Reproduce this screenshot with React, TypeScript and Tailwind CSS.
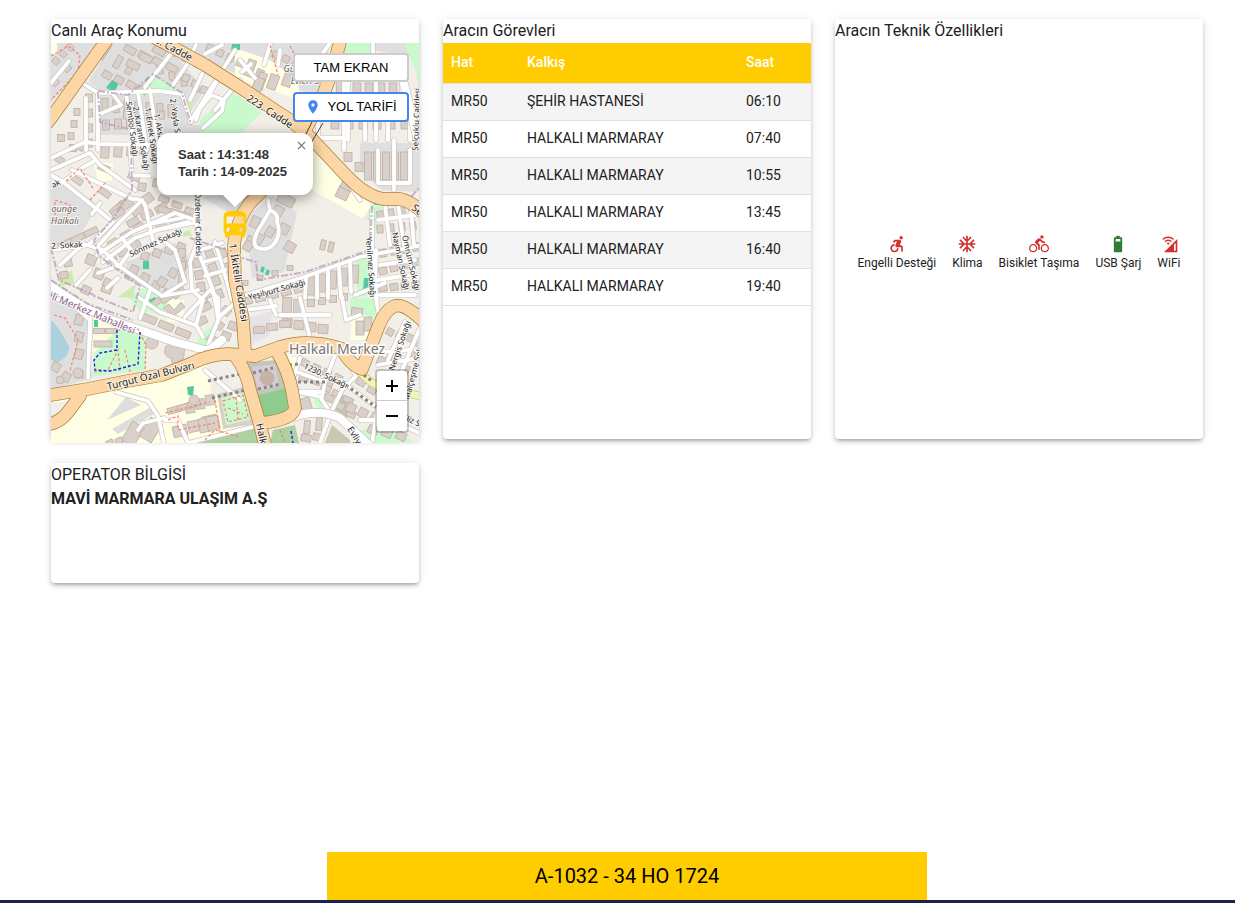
import React from "react";
import {
  MdAccessibleForward,
  MdAcUnit,
  MdCellWifi,
  MdDirectionsBike,
  MdDirectionsBus,
  MdLocationOn,
} from "react-icons/md";

type Area = [fill: string, d: string];
type Row = [x: number, y: number, dx: number, dy: number, count: number, w: number, h: number, angle: number];
type Label = [text: string, x: number, y: number, angle: number, size: number];

const areas: Area[] = [
  ["#e0dfdf", "M98 43H419V58L330 43L318 95L240 75L165 43L205 90L185 120H165V92H100V90L88 82L112 43Z"],
  ["#e0dfdf", "M51 43H100L51 103Z"],
  ["#ffffe5", "M51 43H57V54H51Z"],
  ["#e0dfdf", "M100 92L190 90L190 135H98Z"],
  ["#e0dfdf", "M51 190L65 180L98 205L82 232L51 248Z"],
  ["#e0dfdf", "M126 262L175 243L188 255L187 285L160 296L126 278Z"],
  ["#e0dfdf", "M240 222L272 196L297 213L284 272L252 278L248 240Z"],
  ["#e0dfdf", "M165 125L240 125L240 215L232 215L170 178Z"],
  ["#e0dfdf", "M360 143H419V192L382 190L360 170Z"],
  ["#e0dfdf", "M51 297L88 312L92 378L51 390Z"],
  ["#ffffe5", "M51 402L90 393L165 379L205 363L212 370L235 400L250 443H51V425L75 402Z"],
  ["#ffffe5", "M235 48L270 60L298 80L300 100L235 78Z"],
  ["#ffffe5", "M290 135L312 145L345 178L372 206L362 218L312 190Z"],
  ["#ffffe5", "M94 163L113 163L112 180L98 182Z"],
  ["#ffffe5", "M160 300H184V322H168Z"],
  ["#ffffe5", "M352 315H376V340H350Z"],
  ["#ffffe5", "M278 355L300 358L292 378L285 378Z"],
  ["#f2efe9", "M207 366L238 362L245 386L212 398Z"],
  ["#fffbe0", "M90 318H118V352H90Z"],
  ["#c8facc", "M343 43H372V62H341Z M376 43H404L416 72L419 92V43Z"],
  ["#c8facc", "M150 73L182 91L140 96Z"],
  ["#cdebb0", "M183 97L193 100L190 117L186 116Z"],
  ["#c8facc", "M200 120L232 92L262 112L240 134H200Z"],
  ["#c8facc", "M366 218L373 200L384 204L376 230Z"],
  ["#c8facc", "M356 257L371 256L373 295L357 297Z"],
  ["#c8facc", "M350 298H376V318L350 312Z"],
  ["#c8facc", "M95 352L118 329L146 330V370L92 377Z"],
  ["#c8facc", "M128 297L150 285L170 296L163 315L140 311Z"],
  ["#cdebb0", "M60 277L72 270L74 284L59 286Z M118 297L136 284L133 298Z"],
  ["#c8facc", "M196 340L212 326L216 348L206 352Z"],
  ["#cdebb0", "M184 232L190 230L192 236L182 237Z"],
  ["#d9d0c9", "M217 394L247 386L253 424L223 429Z"],
  ["#c8facc", "M221 398L244 392L250 420L226 425Z"],
  ["#c5c7b5", "M242 363L276 360L288 395L287 414L262 418L256 390Z"],
  ["#8dcc8d", "M256 396L285 388L289 412L264 420Z"],
  ["#d8ccd8", "M253 367L275 364L279 386L258 391Z"],
  ["#aed1a0", "M195 440L260 422L262 443H193Z"],
  ["#aed1a0", "M273 430L295 425L299 443H270Z"],
  ["#c8facc", "M313 396L322 396L323 409L316 407Z"],
  ["#c8facc", "M361 430L400 428L412 443H355Z"],
  ["#c8c7b0", "M332 425L350 440V443H325Z"],
  ["#c5c7b5", "M340 393L353 401L347 418L335 410Z"],
  ["#e6e3e6", "M248 318L272 311L270 335L250 345Z"],
  ["#dddddd", "M107 420L126 397L141 405Z M112 429L151 407L156 413L118 434Z"],
  ["#aad3df", "M51 320C60 328 64 338 69 346C70 356 62 360 56 363L51 359Z"],
  ["#54c99e", "M112 80L119 82L115 92L106 88Z M147 77L153 79L150 86L145 83Z M143 261H149V269H143Z M187 387L194 386L193 396L188 395Z M186 403L191 402V406H186Z M364 278H373V290H363Z M232 44H240V50H231Z M149 300L155 297L157 302L151 305Z M94 320H98V327H94Z M262 266L265 268L263 273L260 271Z M267 269L270 271L268 276L265 274Z"],
  ["#88c9a4", "M360 356L370 351L368 362Z"],
];

const trunk = [
  "M116 27L51 118L40 132",
  "M140 30L165 43L205 65L235 84L290 120L310 137L340 169Q365 197 384 199L400 199Q410 201 424 213",
  "M341 38L332 72L320 103L304 132L285 168L250 203Q236 221 234 245L235 280L243 320L245 352",
  "M45 396L88 389L128 381L162 375L190 364Q210 354 228 354L255 356L280 347Q310 338 342 349Q350 365 362 369L379 325Q386 309 395 306Q405 303 425 323",
  "M45 425Q60 423 68 412L80 396",
  "M236 357Q246 370 250 390L257 414L266 448",
  "M276 350Q288 370 292 390L295 408Q293 420 262 423",
];

const avenues = ["M47 283Q90 315 135 328L175 342L205 350", "M222 340L205 353M293 417Q320 408 340 418L372 448", "M404 84L419 145"];

const streets = [
  "M84 84L98 93L160 91L182 94L191 122",
  "M51 83L69 61M98 92V150M86 98V150M51 158L85 142L100 144L150 145",
  "M150 90L160 160M138 92L147 150M126 93L133 140M113 94L121 105L100 114",
  "M205 68L190 100M220 76L203 105M190 60L173 85M173 51L145 87M235 50L190 122",
  "M196 45L190 58M222 45L205 54M240 80L215 110M196 120L200 108L211 95L224 100L222 111L203 128",
  "M240 60L255 78M270 45L264 65M280 50L278 65M251 64L242 72",
  "M63 182L113 222L103 232L88 245L51 250M100 203L92 214M72 170L132 199Q142 198 145 205L153 240",
  "M51 175L63 182L82 168L96 160",
  "M51 170L90 153L100 165L135 190M130 145L132 175L150 176",
  "M96 248L118 224L142 200M97 255L132 232L175 213L195 220M103 262L135 238L158 230L198 222M150 224L182 218M155 230L188 222",
  "M84 244L103 250L119 266L162 296L198 290M122 238L131 250L121 264",
  "M162 296L185 282L175 250L160 238M198 240L190 262L192 290L203 300",
  "M197 248L213 290L218 318M215 242L225 275L232 300M203 262L220 258M205 276L225 270",
  "M195 215L200 250L222 243",
  "M268 200L270 210Q279 214 277 222Q282 235 273 245Q266 252 256 247Q251 240 262 224L270 210",
  "M238 260L235 290L246 295L304 277L360 257L418 246",
  "M306 278L305 298M317 274L317 298M328 271L328 298M339 267L341 298M350 263L351 292M355 295L385 283",
  "M245 310L276 306M270 300L276 315M300 298L310 338M280 315L330 315M342 297L346 320L360 315M376 250L375 295L380 320",
  "M372 210L372 260L377 300M385 205L390 245M398 204L404 245M411 210L414 245M378 220L415 215M380 265L415 260M378 280L415 274M380 295L415 295",
  "M378 150V183H410V150M394 140V190M330 95L365 95V140M348 60V140M344 80V150M318 100V138H343",
  "M376 60V140M373 43V60M402 60V100M365 98H402M388 110V140M410 110V140",
  "M60 265L80 247M98 273L118 266M76 285L90 270M118 278L107 288",
  "M138 297L160 312L195 325M150 290L140 318M185 317L210 290L218 298M203 300L196 325L203 337M218 300L219 318L206 350M218 318L235 303",
  "M90 318L88 378M70 302L90 320V340M51 296L74 306",
  "M116 392L148 401L158 416L164 443M165 420L178 420L188 443M138 430L143 423L164 418",
  "M188 443L260 425M205 370L240 400",
  "M300 358L293 378L297 392L320 392M297 372L325 382L322 397L297 392M320 397L330 412M335 355L325 382M348 362L356 376L342 390L330 415M340 380L375 406",
  "M378 365L419 358M380 352L410 350M405 322L388 360M419 330L400 375M375 385L385 376",
  "M329 418L320 443M374 420L360 420M378 406L372 443M380 415L419 433",
  "M345 178L360 200M330 43L318 60",
];

const rows: Row[] = [
  [105, 52, 0, 12, 1, 16, 5, -55], [118, 62, 12, 6, 2, 13, 6, -60], [107, 75, 12, 5, 4, 9, 7, 30],
  [130, 50, 14, 6, 4, 12, 7, 30], [133, 65, 13, -7, 3, 13, 7, 28], [174, 52, 12, 6, 4, 6, 8, 25],
  [160, 70, 12, 6, 5, 6, 8, -8], [186, 78, 9, 6, 3, 7, 7, 20], [56, 61, 7, -7, 3, 7, 6, 45],
  [55, 82, 12, -14, 2, 7, 7, 45], [89, 98, 0, 15, 4, 7, 8, 0], [77, 112, -3, 12, 3, 6, 7, 0],
  [61, 138, 12, 10, 2, 7, 7, 0], [105, 105, 11, 1, 7, 6, 13, -2], [106, 125, 12, -1, 3, 7, 10, 0],
  [105, 152, 13, -1, 4, 8, 12, 4], [126, 115, 12, 0, 5, 5, 8, 4], [210, 48, 10, 5, 6, 7, 7, 22],
  [250, 68, 11, 13, 2, 8, 17, 20], [258, 85, 15, -3, 3, 9, 15, 20], [276, 55, 10, 4, 5, 7, 7, 28],
  [340, 92, 12, 0, 1, 7, 45, -2], [357, 92, 12, 0, 4, 8, 18, 0], [335, 120, 14, 0, 6, 8, 18, 0],
  [368, 166, 9, 0, 5, 7, 28, 0], [348, 157, 11, 10, 2, 8, 9, 0], [343, 193, 5, -9, 2, 12, 12, 25],
  [60, 160, 20, -13, 2, 8, 6, 30], [77, 180, 28, 13, 2, 12, 6, 35], [104, 168, 30, 9, 3, 12, 6, 22],
  [117, 208, 8, -6, 2, 16, 6, -42], [65, 244, 13, -6, 3, 14, 6, -25], [118, 213, 9, -9, 2, 12, 8, -35],
  [133, 222, 14, -7, 3, 12, 7, -30], [164, 210, 12, 3, 3, 12, 6, 18], [113, 243, 13, -8, 3, 10, 7, -30],
  [111, 259, 12, -7, 3, 11, 7, -28], [161, 226, 14, -5, 2, 10, 6, -15], [137, 210, 10, -11, 2, 12, 9, -35],
  [164, 199, 13, 6, 3, 10, 6, 18], [142, 187, 15, -4, 2, 8, 8, 8], [145, 256, 12, -3, 4, 8, 8, 20],
  [134, 270, 11, 8, 4, 8, 9, 25], [162, 282, 11, -9, 3, 8, 9, 30], [182, 253, 0, 13, 3, 7, 9, 4],
  [197, 263, 2, 12, 4, 8, 9, -10], [210, 255, 3, 13, 4, 8, 9, -20], [223, 253, 3, 15, 3, 7, 9, -16],
  [68, 263, -4, 12, 2, 8, 7, -10], [91, 260, 8, 14, 3, 10, 10, 20], [86, 290, 22, -7, 3, 9, 8, 25],
  [286, 200, 0, 0, 1, 17, 10, 26], [278, 211, 6, 18, 3, 10, 10, 30], [255, 222, -5, 20, 2, 8, 11, 25],
  [248, 246, 11, -7, 3, 8, 10, 30], [323, 245, 8, 2, 2, 5, 10, 12], [247, 301, 13, -3, 5, 10, 7, -14],
  [311, 286, 11, -3, 5, 7, 18, 2], [311, 303, 11, -2, 4, 7, 7, 0], [245, 283, 15, -5, 4, 6, 5, 0],
  [287, 306, 11, 2, 2, 9, 17, 2], [287, 323, 12, 2, 4, 10, 9, 4], [259, 330, 13, -3, 3, 11, 7, -4],
  [357, 312, 0, 0, 1, 11, 8, 5], [360, 328, 8, -4, 2, 8, 14, 0],
  [380, 215, 11, -2, 4, 6, 8, -8], [380, 229, 11, -1, 4, 6, 8, -5], [383, 253, 11, -2, 4, 7, 8, -8],
  [383, 271, 11, -3, 4, 8, 7, -12], [383, 288, 11, -1, 4, 8, 7, -8], [390, 332, 10, 3, 3, 7, 7, 28],
  [155, 303, 12, -5, 3, 13, 6, -35], [149, 319, 17, 7, 3, 15, 7, 22], [210, 293, -4, 14, 3, 10, 7, -28],
  [226, 311, -7, 14, 3, 9, 8, 40], [226, 336, 7, -10, 2, 9, 8, 20], [153, 338, 22, 12, 2, 10, 9, 12],
  [99, 331, 12, 0, 2, 11, 5, 0], [103, 344, 0, 0, 1, 18, 6, 0], [79, 320, 0, 17, 3, 8, 10, 15],
  [56, 367, 10, 10, 2, 8, 9, 30], [79, 374, 12, -8, 1, 8, 8, 0], [190, 408, 10, -4, 3, 9, 10, -8],
  [180, 431, 15, -5, 3, 14, 11, -12], [133, 434, 18, -4, 2, 14, 22, 32], [174, 410, 10, -3, 3, 13, 6, -15],
  [110, 443, 9, -2, 2, 7, 6, -25], [205, 425, 8, -2, 2, 12, 14, -12], [306, 405, 0, 0, 1, 10, 14, -18],
  [307, 427, 12, -3, 2, 6, 13, 5], [318, 437, -12, 1, 2, 10, 7, 10], [305, 363, 11, 5, 4, 8, 7, 28],
  [304, 378, 12, 3, 3, 9, 7, 20], [326, 388, 11, 6, 3, 10, 6, 25], [329, 398, 11, 8, 3, 9, 7, 25],
  [351, 408, 12, 5, 3, 9, 9, 28], [361, 382, 11, 8, 2, 9, 7, 30], [382, 361, 10, -5, 2, 9, 8, 28],
  [373, 430, 14, 3, 3, 10, 8, 25], [406, 370, 6, -14, 3, 6, 9, 25],
];

const boundaries = [
  "M98 91L128 95L153 74L182 93L191 125M98 92L100 122L128 129",
  "M131 145L132 190L112 220L94 240L99 256L140 286L133 312L92 295",
  "M51 248L59 280L94 295M372 206L370 250L305 272L258 280L256 262L235 256",
  "M190 238L220 248L235 252M374 204L395 204L410 198L419 188",
  "M51 280L88 304L133 320",
];

const footways = [
  "M51 56L68 46L80 55L78 72L51 100",
  "M66 181L80 168L94 190M90 200L106 182",
  "M54 315L65 318L78 340L70 371M55 220L55 200L70 205L65 225",
  "M94 372L120 370L118 350L108 370M117 330L138 329L146 345L145 370M125 350L130 372",
  "M168 420L178 416V430L215 423M165 413L210 402M215 400L220 432M223 401L243 395L248 417L228 422ZM228 408L243 414M236 397L238 420",
  "M205 440L215 430L240 437M270 45L278 75M290 46L302 68",
  "M280 430L285 443",
];

const labels: Label[] = [
  ["3. Cadde", 154, 42, 28, 10], ["223. Cadde", 246, 100, 33, 10], ["2. Yayla S.", 170, 99, 82, 8],
  ["1. Aksa S.", 154, 114, 80, 8], ["1. Emek Sokağı", 145, 108, 82, 8], ["2. Karanfil Sokağı", 133, 107, 80, 8],
  ["Sembol Sokağı", 126, 102, 83, 8], ["Selçuklu Caddesi", 418, 151, -88, 8], ["ak", 53, 188, -25, 8],
  ["42. Sokak", 47, 249, -3, 8], ["Sönmez Sokağı", 131, 257, -25, 8], ["Özdemir Caddesi", 195, 192, 89, 8],
  ["1. İkitelli Caddesi", 229, 244, 81, 10], ["Yenilmez Sokağı", 366, 237, 86, 8], ["Nayman Sokağı", 392, 233, 78, 8],
  ["Ömrüm Sokağı", 402, 236, 77, 8], ["Yeşilyurt Sokağı", 249, 300, -15, 8], ["Turgut Özal Bulvarı", 108, 390, -14, 10],
  ["1230. Sokağı", 303, 368, 25, 8], ["Nergis Sokağı", 394, 371, -71, 8], ["Malçeşme Sokağı", 409, 400, -75, 8],
  ["Evliya Çelebi", 347, 429, 58, 9], ["Halkalı Cad.", 256, 424, 78, 10], ["Filiz Sokak", 400, 418, 25, 8], ["Se", 411, 209, 38, 10],
];

function Roads({ paths, casing, fill, width }: { paths: string[]; casing: string; fill: string; width: number }) {
  return (
    <g fill="none" strokeLinejoin="round" strokeLinecap="round">
      {paths.map((d) => (
        <path key={`c${d}`} d={d} stroke={casing} strokeWidth={width + 1.4} />
      ))}
      {paths.map((d) => (
        <path key={d} d={d} stroke={fill} strokeWidth={width} />
      ))}
    </g>
  );
}

function StreetMap() {
  return (
    <svg
      viewBox="51 43 368 400"
      preserveAspectRatio="xMidYMid slice"
      className="block h-[400px] w-full"
      role="img"
      aria-label="Harita"
    >
      <rect x="-400" y="-400" width="1400" height="1400" fill="#f2efe9" />
      {areas.map(([fill, d]) => (
        <path key={d} d={d} fill={fill} />
      ))}
      <g fill="#d9d0c9" stroke="#bfaea3" strokeWidth="0.8">
        {rows.flatMap(([x, y, dx, dy, count, w, h, angle]) =>
          Array.from({ length: count }, (_, i) => (
            <rect
              key={`${x}-${y}-${i}`}
              x={-w / 2}
              y={-h / 2}
              width={w}
              height={h}
              transform={`translate(${x + dx * i} ${y + dy * i}) rotate(${angle})`}
            />
          ))
        )}
        <path d="M165 350C164 344 173 343 176 347C181 343 187 348 184 353C185 359 180 360 180 364C174 367 170 362 172 358C167 358 164 355 165 350Z" />
        <path d="M163 308L169 304L174 310L181 302L185 307L174 316Z" />
        <circle cx="267" cy="378" r="7" fill="#c5b3aa" />
        <circle cx="152" cy="343" r="6" />
        <circle cx="194" cy="400" r="5" />
        <circle cx="60" cy="380" r="4" />
        <circle cx="78" cy="373" r="5" />
      </g>
      <Roads paths={streets} casing="#c9c5c2" fill="#ffffff" width={3.8} />
      <Roads paths={avenues} casing="#c9c5c2" fill="#ffffff" width={8} />
      <Roads paths={["M357 368Q372 388 392 390L425 397"]} casing="#c5c58a" fill="#f3f5b0" width={7} />
      <g fill="none" stroke="#b79cba" strokeWidth="2" strokeDasharray="7 2 2 2" opacity="0.75">
        {boundaries.map((d) => (
          <path key={d} d={d} />
        ))}
      </g>
      <g fill="none" stroke="#fa8072" strokeWidth="1.2" strokeDasharray="3 2">
        {footways.map((d) => (
          <path key={d} d={d} />
        ))}
      </g>
      <path
        d="M117 330V350L100 353L94 360L95 370L110 371L138 364L140 332M291 431L293 443"
        fill="none"
        stroke="#1e1ee6"
        strokeWidth="1.4"
        strokeDasharray="3 2"
      />
      <path
        d="M208 381L240 374M212 398L246 390M253 373L273 368M258 389L281 384M289 365L299 364M298 382H328M354 368L372 381M346 385L376 407"
        fill="none"
        stroke="#888583"
        strokeWidth="3"
        strokeDasharray="3 3"
      />
      <Roads paths={trunk} casing="#a97b35" fill="#fcd6a4" width={12} />
      <path d="M304 138L313 120M311 143L323 123" stroke="#4b3c28" strokeWidth="1" fill="none" />
      <g stroke="#ffffff" strokeWidth="2" strokeOpacity="0.7" paintOrder="stroke" className="font-['Noto_Sans',sans-serif]">
        {labels.map(([text, x, y, angle, size]) => (
          <text key={text} fontSize={size} fill="#222222" transform={`translate(${x} ${y}) rotate(${angle})`}>
            {text}
          </text>
        ))}
        <text fontSize="10" fill="#8d618b" transform="translate(46 297) rotate(23)">
          eli Merkez Mahallesi
        </text>
        <g fill="#6b6560" fontStyle="italic" fontSize="9" textAnchor="middle">
          <text x="62" y="212">Lounge</text>
          <text x="65" y="224">Halkalı</text>
          <text x="296" y="72">Güneş</text>
          <text x="306" y="84">Evleri S.</text>
        </g>
        <text x="337" y="354" fontSize="14" fill="#777777" strokeWidth="3" strokeOpacity="0.9" textAnchor="middle">
          Halkalı Merkez
        </text>
      </g>
    </svg>
  );
}

function BatteryIcon({ className }: { className: string }) {
  return (
    <svg viewBox="0 0 24 24" fill="currentColor" fillRule="evenodd" className={className} aria-hidden="true">
      <path d="M15.67 4H14V2h-4v2H8.33C7.6 4 7 4.6 7 5.33v15.33C7 21.4 7.6 22 8.33 22h7.33c.74 0 1.34-.6 1.34-1.33V5.33C17 4.6 16.4 4 15.67 4zM9.2 6h5.6v3H9.2z" />
    </svg>
  );
}

function Card({ title, className, children }: { title: string; className: string; children?: React.ReactNode }) {
  return (
    <section
      className={`flex flex-col rounded bg-white shadow-[0_3px_3px_-2px_rgba(0,0,0,0.2),0_3px_4px_0_rgba(0,0,0,0.14),0_1px_8px_0_rgba(0,0,0,0.12)] ${className}`}
    >
      <h2 className="text-base leading-6">{title}</h2>
      {children}
    </section>
  );
}

const trips = [
  ["MR50", "ŞEHİR HASTANESİ", "06:10"],
  ["MR50", "HALKALI MARMARAY", "07:40"],
  ["MR50", "HALKALI MARMARAY", "10:55"],
  ["MR50", "HALKALI MARMARAY", "13:45"],
  ["MR50", "HALKALI MARMARAY", "16:40"],
  ["MR50", "HALKALI MARMARAY", "19:40"],
];

const features = [
  { label: "Engelli Desteği", Icon: MdAccessibleForward, color: "text-[#d32f2f]" },
  { label: "Klima", Icon: MdAcUnit, color: "text-[#d32f2f]" },
  { label: "Bisiklet Taşıma", Icon: MdDirectionsBike, color: "text-[#d32f2f]" },
  { label: "USB Şarj", Icon: BatteryIcon, color: "text-[#2e7d32]" },
  { label: "WiFi", Icon: MdCellWifi, color: "text-[#d32f2f]" },
];

function LiveMap() {
  return (
    <div className="relative -mb-1 overflow-hidden font-['Liberation_Sans',Arial,sans-serif]">
      <StreetMap />
      <MdDirectionsBus className="absolute top-[165px] left-1/2 size-[34px] -translate-x-1/2 text-[#ffcc00]" />
      <div className="absolute top-[90px] left-1/2 w-[156px] -translate-x-1/2">
        <svg viewBox="0 0 32 16" className="absolute top-[58px] left-1/2 h-4 w-8 -translate-x-1/2 drop-shadow-md" aria-hidden="true">
          <path d="M0 0H32L16 16Z" fill="#ffffff" />
        </svg>
        <div className="relative rounded-xl bg-white pt-[13px] pr-6 pb-[15px] pl-[21px] text-[13px] leading-[17px] font-bold whitespace-nowrap text-[#333333] shadow-[0_3px_14px_rgba(0,0,0,0.4)]">
          <p>Saat : 14:31:48</p>
          <p>Tarih : 14-09-2025</p>
        </div>
        <svg viewBox="0 0 32 16" className="absolute top-[58px] left-1/2 h-4 w-8 -translate-x-1/2" aria-hidden="true">
          <path d="M0 0H32L16 16Z" fill="#ffffff" />
        </svg>
        <button type="button" aria-label="Kapat" className="absolute top-0 right-0 flex size-6 items-center justify-center text-[#757575]">
          <svg viewBox="0 0 10 10" className="size-[9px]" aria-hidden="true">
            <path d="M1 1L9 9M9 1L1 9" stroke="currentColor" strokeWidth="1.4" fill="none" />
          </svg>
        </button>
      </div>
      <div className="absolute top-2.5 right-2.5 flex w-[116px] flex-col gap-2.5 text-[13px] text-black">
        <button type="button" className="h-[29px] rounded border-2 border-[#cccccc] bg-white">
          TAM EKRAN
        </button>
        <button type="button" className="flex h-[30px] items-center justify-center gap-1.5 rounded border-2 border-[#4285f4] bg-white">
          <MdLocationOn className="size-4 text-[#4285f4]" />
          YOL TARİFİ
        </button>
      </div>
      <div className="absolute right-2.5 bottom-2.5 flex flex-col rounded border-2 border-black/20 bg-white bg-clip-padding text-black">
        <button type="button" aria-label="Yakınlaştır" className="flex size-[30px] items-center justify-center border-b border-[#cccccc]">
          <svg viewBox="0 0 12 12" className="size-3" aria-hidden="true">
            <path d="M6 0V12M0 6H12" stroke="currentColor" strokeWidth="2" />
          </svg>
        </button>
        <button type="button" aria-label="Uzaklaştır" className="flex size-[30px] items-center justify-center">
          <svg viewBox="0 0 12 12" className="size-3" aria-hidden="true">
            <path d="M0 6H12" stroke="currentColor" strokeWidth="2" />
          </svg>
        </button>
      </div>
    </div>
  );
}

export default function App() {
  return (
    <div className="flex min-h-screen flex-col bg-white font-[Roboto,sans-serif] text-[#212121]">
      <main className="grid flex-1 grid-cols-3 content-start items-start gap-6 pt-[19px] pr-8 pl-[51px]">
        <Card title="Canlı Araç Konumu" className="min-h-[420px]">
          <LiveMap />
        </Card>
        <Card title="Aracın Görevleri" className="min-h-[420px]">
          <table className="w-full text-left text-sm leading-5">
            <thead>
              <tr className="border-b border-[#e0e0e0] bg-[#ffcc00] leading-6 text-white">
                <th className="w-[76px] px-2 pt-[7px] pb-[9px] font-medium">Hat</th>
                <th className="px-2 pt-[7px] pb-[9px] font-medium">Kalkış</th>
                <th className="w-[73px] px-2 pt-[7px] pb-[9px] font-medium">Saat</th>
              </tr>
            </thead>
            <tbody>
              {trips.map(([line, stop, time]) => (
                <tr key={time} className="border-b border-[#e0e0e0] odd:bg-[#f4f4f4]">
                  <td className="px-2 pt-[7px] pb-[9px]">{line}</td>
                  <td className="px-2 pt-[7px] pb-[9px]">{stop}</td>
                  <td className="px-2 pt-[7px] pb-[9px]">{time}</td>
                </tr>
              ))}
            </tbody>
          </table>
        </Card>
        <Card title="Aracın Teknik Özellikleri" className="min-h-[420px]">
          <ul className="flex flex-1 items-center justify-center gap-4 pt-6">
            {features.map(({ label, Icon, color }) => (
              <li key={label} className="flex flex-col items-center">
                <Icon className={`size-5 ${color}`} />
                <span className="text-xs leading-[18px] whitespace-nowrap">{label}</span>
              </li>
            ))}
          </ul>
        </Card>
        <Card title="OPERATOR BİLGİSİ" className="min-h-[120px]">
          <p className="text-base leading-6 font-bold">MAVİ MARMARA ULAŞIM A.Ş</p>
        </Card>
      </main>
      <footer className="border-b-[3px] border-[#1b2150] pr-8 pl-[51px]">
        <div className="mx-auto flex h-12 max-w-[600px] items-center justify-center bg-[#ffcc00] text-xl text-black">
          A-1032 - 34 HO 1724
        </div>
      </footer>
    </div>
  );
}
